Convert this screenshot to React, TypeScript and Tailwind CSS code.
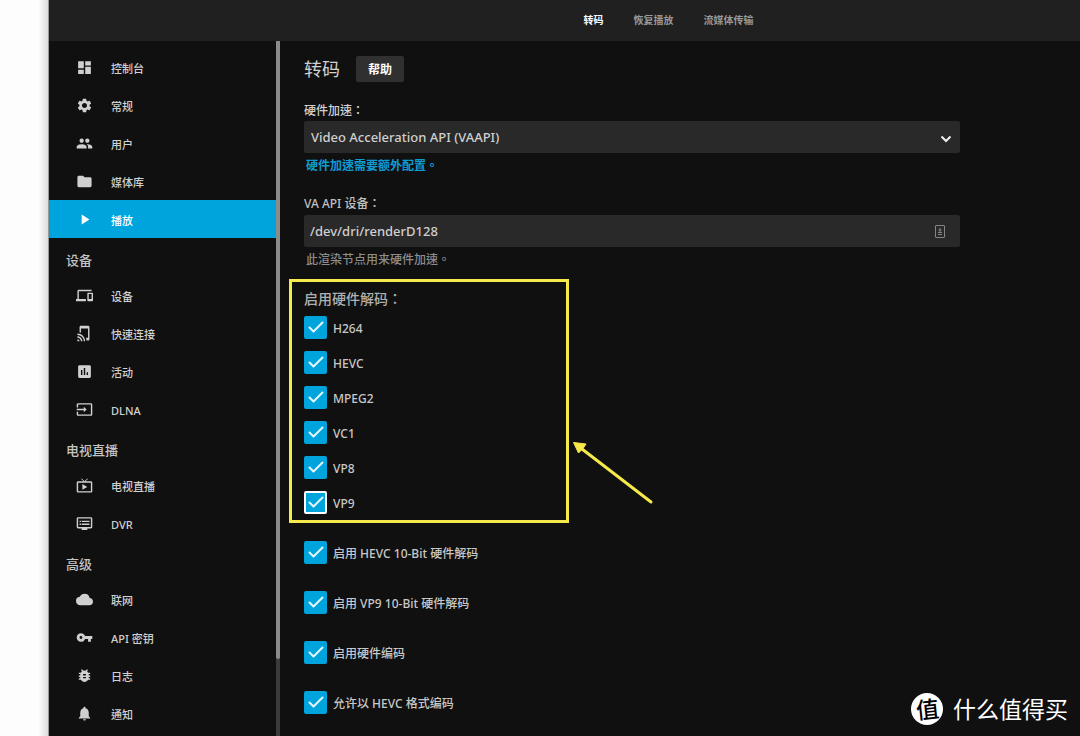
import type { ComponentType } from "react";
import {
  MdAssessment,
  MdBugReport,
  MdCloud,
  MdDashboard,
  MdDevices,
  MdDvr,
  MdFolder,
  MdInput,
  MdLiveTv,
  MdNotifications,
  MdPeople,
  MdPlayArrow,
  MdSettings,
  MdTapAndPlay,
  MdVpnKey,
} from "react-icons/md";

type NavItem = {
  label: string;
  icon: ComponentType<{ className?: string }>;
  active?: boolean;
};

type NavGroup = { title?: string; items: NavItem[] };

const navGroups: NavGroup[] = [
  {
    items: [
      { label: "控制台", icon: MdDashboard },
      { label: "常规", icon: MdSettings },
      { label: "用户", icon: MdPeople },
      { label: "媒体库", icon: MdFolder },
      { label: "播放", icon: MdPlayArrow, active: true },
    ],
  },
  {
    title: "设备",
    items: [
      { label: "设备", icon: MdDevices },
      { label: "快速连接", icon: MdTapAndPlay },
      { label: "活动", icon: MdAssessment },
      { label: "DLNA", icon: MdInput },
    ],
  },
  {
    title: "电视直播",
    items: [
      { label: "电视直播", icon: MdLiveTv },
      { label: "DVR", icon: MdDvr },
    ],
  },
  {
    title: "高级",
    items: [
      { label: "联网", icon: MdCloud },
      { label: "API 密钥", icon: MdVpnKey },
      { label: "日志", icon: MdBugReport },
      { label: "通知", icon: MdNotifications },
    ],
  },
];

const tabs = ["转码", "恢复播放", "流媒体传输"];

const codecs = ["H264", "HEVC", "MPEG2", "VC1", "VP8", "VP9"];

const options = [
  "启用 HEVC 10-Bit 硬件解码",
  "启用 VP9 10-Bit 硬件解码",
  "启用硬件编码",
  "允许以 HEVC 格式编码",
];

function Checkbox({ label, focused = false }: { label: string; focused?: boolean }) {
  return (
    <label className="flex items-center gap-[6px] text-xs font-medium text-[#c8c8c8]">
      <span className="relative size-[23px] shrink-0">
        <input
          type="checkbox"
          defaultChecked
          className={`peer block size-full appearance-none rounded-xs border-2 border-[#777] checked:bg-[#00a4dc] ${
            focused ? "checked:border-white" : "checked:border-[#00a4dc]"
          }`}
        />
        <svg
          viewBox="0 0 23 23"
          className="pointer-events-none absolute inset-0 hidden size-full peer-checked:block"
          fill="none"
          stroke="#e4f8ff"
          strokeWidth="2"
          strokeLinecap="round"
          strokeLinejoin="round"
        >
          <path d="M5.500 11.500 9.500 15.500 18.500 6.500" />
        </svg>
      </span>
      <span className="pt-[2px]">{label}</span>
    </label>
  );
}

function Sidebar() {
  return (
    <aside className="flex w-[231px] shrink-0">
      <nav className="min-w-0 flex-1 overflow-hidden pt-[7px]">
        {navGroups.map((group, index) => (
          <div key={group.title ?? index}>
            {group.title && (
              <h2 className="flex h-[38px] items-center pt-2 pl-[17px] text-[13px] font-medium text-[#c4c4c4]">
                {group.title}
              </h2>
            )}
            {group.items.map(({ label, icon: Icon, active }) => (
              <a
                key={label}
                href="#"
                className={`flex h-[38px] items-center gap-[18px] pl-[27px] text-[11px] font-medium ${
                  active ? "bg-[#00a4dc] text-white" : "text-[#d0d0d0]"
                }`}
              >
                <Icon className="size-[17px] shrink-0" />
                <span className="pt-1">{label}</span>
              </a>
            ))}
          </div>
        ))}
      </nav>
      <div className="flex w-1 flex-col bg-[#3b3b3b]">
        <div className="h-8/9 rounded-b-xs bg-[#8b8b8b]" />
      </div>
    </aside>
  );
}

function Annotation() {
  return (
    <>
      <div className="pointer-events-none absolute -top-[10px] -left-[15px] h-[244px] w-[280px] border-3 border-[#f5e94c]" />
      <svg
        viewBox="0 0 82 66"
        className="pointer-events-none absolute top-[152px] left-[268px] h-[66px] w-[82px]"
      >
        <path d="M10 8 79 61" stroke="#f5e94c" strokeWidth="3" strokeLinecap="round" />
        <path d="M1.500 1.500 14 3 11 7.500 6.500 12Z" fill="#f5e94c" stroke="#f5e94c" strokeLinejoin="round" />
      </svg>
    </>
  );
}

function Watermark() {
  return (
    <div className="pointer-events-none absolute right-3 bottom-[11px] flex items-center gap-[10px] text-white">
      <span className="flex size-8 items-center justify-center rounded-full bg-white text-[23px] leading-none font-medium text-black">
        <span className="-rotate-6">值</span>
      </span>
      <span className="text-[23px] leading-8">什么值得买</span>
    </div>
  );
}

export default function App() {
  return (
    <div className="relative flex h-screen overflow-hidden bg-[#fcfcfc] font-['Noto_Sans','Noto_Sans_CJK_TC',sans-serif]">
      <div className="w-[49px] shrink-0 border-r border-[#999] bg-linear-to-r from-[#fdfdfd] from-80% to-[#dcdcdc]" />
      <div className="flex min-w-0 flex-1 flex-col bg-[#101010] text-[#d0d0d0]">
        <header className="flex h-[41px] shrink-0 items-center justify-center gap-[30px] bg-[#202020] pl-[208px] text-[10px] font-bold">
          {tabs.map((tab, index) => (
            <button key={tab} type="button" className={index === 0 ? "text-white" : "text-[#999]"}>
              {tab}
            </button>
          ))}
        </header>

        <div className="flex min-h-0 flex-1">
          <Sidebar />

          <main className="min-w-0 flex-1 overflow-hidden px-6 pt-[15px]">
            <form className="max-w-[656px]">
              <div className="flex items-center gap-4">
                <h1 className="text-lg leading-[26px]">转码</h1>
                <button
                  type="button"
                  className="h-[26px] w-12 rounded-xs bg-[#303030] pt-[2px] text-xs font-bold text-white"
                >
                  帮助
                </button>
              </div>

              <div className="mt-[19px]">
                <label htmlFor="acceleration" className="block text-xs leading-5 font-medium">
                  硬件加速：
                </label>
                <div className="relative">
                  <select
                    id="acceleration"
                    className="block h-8 w-full appearance-none rounded-xs bg-[#292929] px-[7px] pt-px text-[13px] font-medium text-[#cfcfcf]"
                  >
                    <option>Video Acceleration API (VAAPI)</option>
                  </select>
                  <svg
                    viewBox="0 0 12 8"
                    className="pointer-events-none absolute top-[14px] right-2 h-2 w-3"
                    fill="none"
                    stroke="#eee"
                    strokeWidth="2"
                  >
                    <path d="M1.500 1.500 6 6 10.500 1.500" />
                  </svg>
                </div>
                <a href="#" className="mt-[3px] block pl-[2px] text-xs leading-5 font-bold text-[#0e9bd0]">
                  硬件加速需要额外配置。
                </a>
              </div>

              <div className="mt-[18px]">
                <label htmlFor="device" className="block text-xs leading-5 font-medium text-[#c0c0c0]">
                  VA API 设备：
                </label>
                <div className="relative mt-px">
                  <input
                    id="device"
                    type="text"
                    defaultValue="/dev/dri/renderD128"
                    className="block h-8 w-full rounded-xs bg-[#292929] px-[6px] text-[13px] font-medium text-[#cfcfcf]"
                  />
                  <svg
                    viewBox="0 0 10 13"
                    className="pointer-events-none absolute top-[10px] right-[15px] h-[13px] w-[10px]"
                    fill="none"
                    stroke="#858585"
                  >
                    <rect x="0.500" y="0.500" width="9" height="12" rx="0.500" />
                    <path d="M5 3v4M3.500 5h3M3 7.500h4M3 9.500h4" />
                  </svg>
                </div>
                <p className="mt-[3px] pl-[2px] text-xs leading-5 font-medium text-[#8c8c8c]">
                  此渲染节点用来硬件加速。
                </p>
              </div>

              <div className="relative mt-[19px]">
                <fieldset>
                  <legend className="block text-sm leading-5 font-medium text-[#b0b0b0]">
                    启用硬件解码：
                  </legend>
                  <div className="flex flex-col gap-3 pt-[7px]">
                    {codecs.map((codec) => (
                      <Checkbox key={codec} label={codec} focused={codec === "VP9"} />
                    ))}
                  </div>
                </fieldset>
                <Annotation />
              </div>

              <div className="mt-[27px] flex flex-col gap-[27px]">
                {options.map((option) => (
                  <Checkbox key={option} label={option} />
                ))}
              </div>
            </form>
          </main>
        </div>
      </div>
      <Watermark />
    </div>
  );
}
